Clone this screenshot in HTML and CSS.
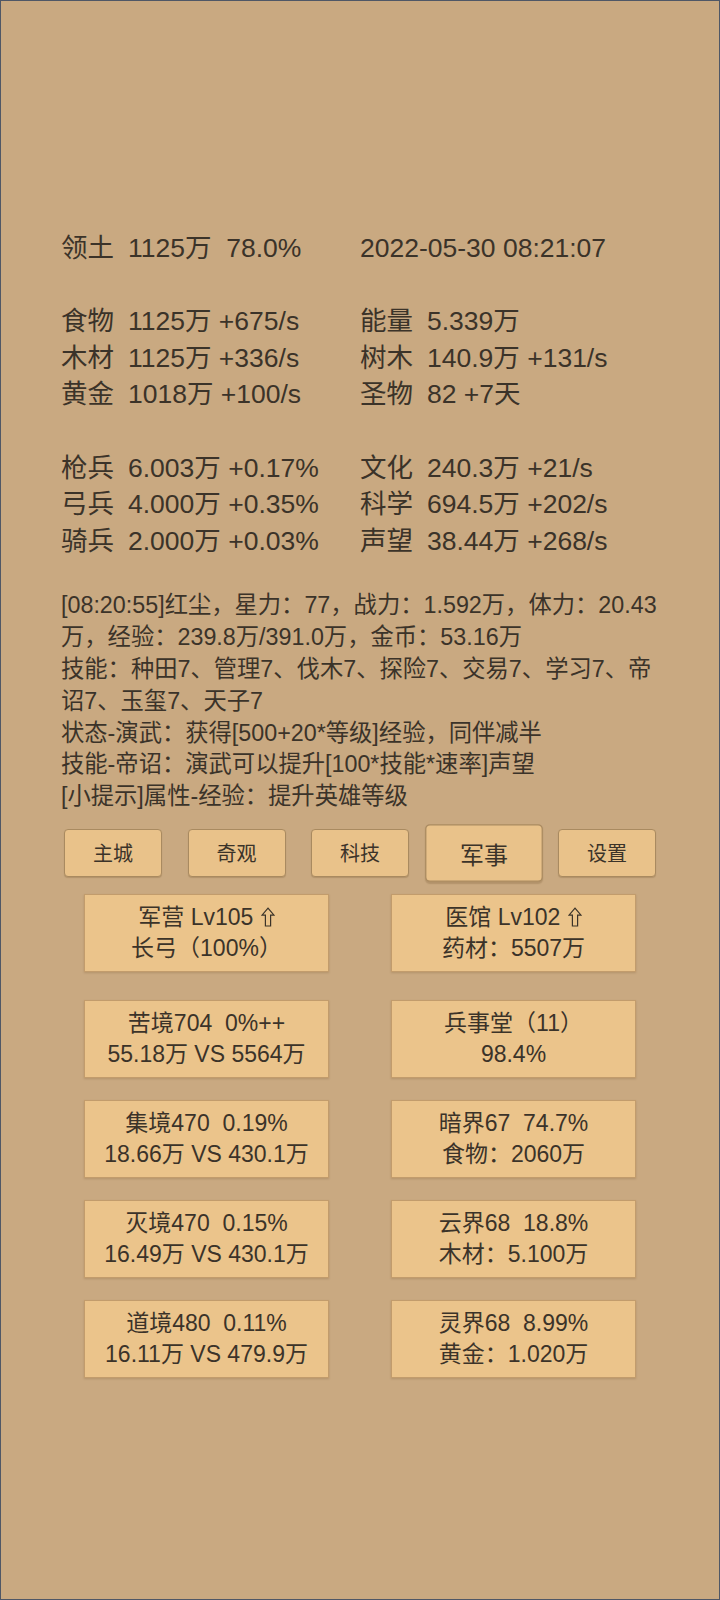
FILE: index.html
```html
<!DOCTYPE html>
<html lang="zh-CN">
<head>
	<meta charset="UTF-8">
	<title>领土</title>
	<link rel="stylesheet" href="styles.css">
</head>
<body>
	<div id="page">
		<div class="stats">
			<div class="cell"><span class="label">领土</span>1125万  78.0%</div>
			<div class="cell">2022-05-30 08:21:07</div>
			<div class="blank"></div>
			<div class="cell"><span class="label">食物</span>1125万 +675/s</div>
			<div class="cell"><span class="label">能量</span>5.339万</div>
			<div class="cell"><span class="label">木材</span>1125万 +336/s</div>
			<div class="cell"><span class="label">树木</span>140.9万 +131/s</div>
			<div class="cell"><span class="label">黄金</span>1018万 +100/s</div>
			<div class="cell"><span class="label">圣物</span>82 +7天</div>
			<div class="blank"></div>
			<div class="cell"><span class="label">枪兵</span>6.003万 +0.17%</div>
			<div class="cell"><span class="label">文化</span>240.3万 +21/s</div>
			<div class="cell"><span class="label">弓兵</span>4.000万 +0.35%</div>
			<div class="cell"><span class="label">科学</span>694.5万 +202/s</div>
			<div class="cell"><span class="label">骑兵</span>2.000万 +0.03%</div>
			<div class="cell"><span class="label">声望</span>38.44万 +268/s</div>
		</div>

		<div class="log">
			<p>[08:20:55]红尘，星力：77，战力：1.592万，体力：20.43万，经验：239.8万/391.0万，金币：53.16万</p>
			<p>技能：种田7、管理7、伐木7、探险7、交易7、学习7、帝诏7、玉玺7、天子7</p>
			<p>状态-演武：获得[500+20*等级]经验，同伴减半</p>
			<p>技能-帝诏：演武可以提升[100*技能*速率]声望</p>
			<p>[小提示]属性-经验：提升英雄等级</p>
		</div>

		<ul class="tabs">
			<li>主城</li>
			<li>奇观</li>
			<li>科技</li>
			<li class="on">军事</li>
			<li>设置</li>
		</ul>

		<div class="cards">
			<div class="row first">
				<div class="card">
					<span>军营 Lv105 <svg class="up" width="14" height="20" viewBox="0 0 14 20"><path d="M7 1.2 L13 8.2 H9.6 V19 H4.4 V8.2 H1 Z" /></svg></span>
					<span>长弓（100%）</span>
				</div>
				<div class="card">
					<span>医馆 Lv102 <svg class="up" width="14" height="20" viewBox="0 0 14 20"><path d="M7 1.2 L13 8.2 H9.6 V19 H4.4 V8.2 H1 Z" /></svg></span>
					<span>药材：5507万</span>
				</div>
			</div>
			<div class="row">
				<div class="card"><span>苦境704  0%++</span><span>55.18万 VS 5564万</span></div>
				<div class="card"><span>兵事堂（11）</span><span>98.4%</span></div>
			</div>
			<div class="row">
				<div class="card"><span>集境470  0.19%</span><span>18.66万 VS 430.1万</span></div>
				<div class="card"><span>暗界67  74.7%</span><span>食物：2060万</span></div>
			</div>
			<div class="row">
				<div class="card"><span>灭境470  0.15%</span><span>16.49万 VS 430.1万</span></div>
				<div class="card"><span>云界68  18.8%</span><span>木材：5.100万</span></div>
			</div>
			<div class="row">
				<div class="card"><span>道境480  0.11%</span><span>16.11万 VS 479.9万</span></div>
				<div class="card"><span>灵界68  8.99%</span><span>黄金：1.020万</span></div>
			</div>
		</div>
	</div>
</body>
</html>
```

FILE: styles.css
```css
*{
	margin: 0;
	padding: 0;
	box-sizing: border-box;
}
ul{
	list-style: none;
}
body{
	font-family: "Liberation Sans", "Noto Sans CJK SC", sans-serif;
	color: #3b3329;
	background: #c9a981;
}
#page{
	width: 720px;
	height: 1600px;
	border: 1px solid #4f5766;
	background: #c9a981;
	padding: 229px 60px 0;
}
.stats{
	display: grid;
	grid-template-columns: 1fr 1fr;
	font-size: 26.5px;
	line-height: 36.6px;
}
.stats .cell{
	white-space: pre;
}
.stats .label{
	display: inline-block;
	width: 67px;
}
.stats .blank{
	grid-column: 1 / 3;
	height: 36.6px;
}
.log{
	margin-top: 31px;
	font-size: 23.3px;
	line-height: 31.8px;
}
.tabs{
	display: flex;
	justify-content: space-between;
	margin-top: 16px;
}
.tabs li{
	width: 98px;
	height: 48px;
	margin: 0 3px;
	display: flex;
	align-items: center;
	justify-content: center;
	font-size: 20px;
	background: #e9c28a;
	border: 1px solid #a98a60;
	border-radius: 4px;
	box-shadow: 0 1px 1px rgba(90, 60, 20, .2);
}
.tabs .on{
	transform: scale(1.2);
}
.cards{
	margin-top: 17px;
	padding: 0 23px;
}
.cards .row{
	display: flex;
	justify-content: space-between;
	margin-bottom: 22px;
}
.cards .first{
	margin-bottom: 28px;
}
.card{
	width: 245px;
	height: 78px;
	display: flex;
	flex-direction: column;
	align-items: center;
	justify-content: center;
	font-size: 23px;
	line-height: 31px;
	background: #ebc48b;
	border: 1px solid #c29c6c;
	box-shadow: 0 1px 2px rgba(90, 60, 20, .2);
}
.card span{
	white-space: pre;
}
.card .up{
	vertical-align: -2px;
	margin-left: 1px;
}
.card .up path{
	fill: none;
	stroke: #3b3329;
	stroke-width: 1.2;
	stroke-linejoin: miter;
}
```
